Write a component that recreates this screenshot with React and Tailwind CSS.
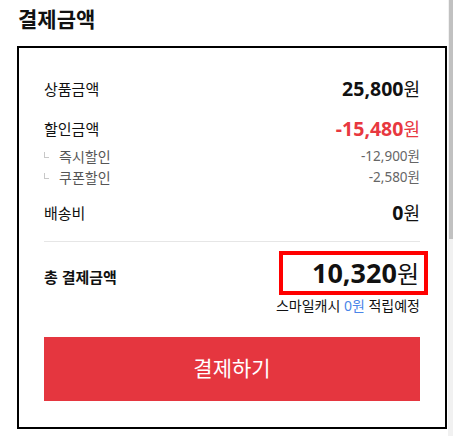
export default function App() {
  const subRows = [
    { label: '즉시할인', value: '-12,900원' },
    { label: '쿠폰할인', value: '-2,580원' },
  ]

  return (
    <div className="flex w-[453px] h-[436px] bg-white text-[#111] font-['Noto_Sans',_'Noto_Sans_CJK_KR',_sans-serif] overflow-hidden">
      <div className="w-[448px]">
        <h1 className="pt-[6px] pl-[18px] text-[21px] leading-[26px] font-bold">결제금액</h1>

        <div className="mt-[14px] ml-[17px] w-[430px] border-2 border-black px-[25px] pt-[29px] pb-[26px]">
          <div className="flex h-[24px] items-center justify-between">
            <span className="text-[15px]">상품금액</span>
            <span className="text-[19.5px] font-bold">25,800<span className="text-[18px] font-normal">원</span></span>
          </div>

          <div className="mt-[16px] flex h-[24px] items-center justify-between">
            <span className="text-[15px]">할인금액</span>
            <span className="text-[19.5px] font-bold text-[#e8383f]">-15,480<span className="text-[18px] font-normal">원</span></span>
          </div>

          <div className="mt-[5px]">
            {subRows.map(r => (
              <div key={r.label} className="flex h-[21px] items-center justify-between text-[13px] text-[#666]">
                <span className="flex items-center">
                  <span className="mr-[10px] mb-[4px] h-[6px] w-[5px] border-b border-l border-[#c8c8c8]"></span>
                  <span className="text-[14px] text-[#555]">{r.label}</span>
                </span>
                <span className="text-[13.5px]">{r.value}</span>
              </div>
            ))}
          </div>

          <div className="mt-[13px] flex h-[24px] items-center justify-between">
            <span className="text-[15px]">배송비</span>
            <span className="text-[19.5px] font-bold">0<span className="text-[18px] font-normal">원</span></span>
          </div>

          <div className="mt-[16px] h-px bg-[#e6e6e6]"></div>

          <div className="mt-[9px] flex h-[44px] items-start justify-between">
            <span className="mt-[16px] h-[20px] text-[15px] leading-[20px] font-bold">총 결제금액</span>
            <div className="-mr-[8px] flex h-[44px] w-[149px] items-center justify-end border-4 border-[#ff0000] pr-[5px]">
              <span className="text-[27px] leading-[30px] font-bold">10,320<span className="text-[24px] font-normal">원</span></span>
            </div>
          </div>

          <div className="mt-[2px] h-[18px] text-right text-[14px] leading-[18px]">
            스마일캐시 <span className="text-[#4a85e8]">0원</span> 적립예정
          </div>

          <button className="mt-[22px] flex h-[64px] w-full items-center justify-center bg-[#e5363f] text-[21px] text-white">
            결제하기
          </button>
        </div>
      </div>

      <div className="h-[436px] w-[5px] bg-[#f1f1f1]">
        <div className="ml-auto h-[239px] w-[4px] bg-[#c1c1c1]"></div>
      </div>
    </div>
  )
}
